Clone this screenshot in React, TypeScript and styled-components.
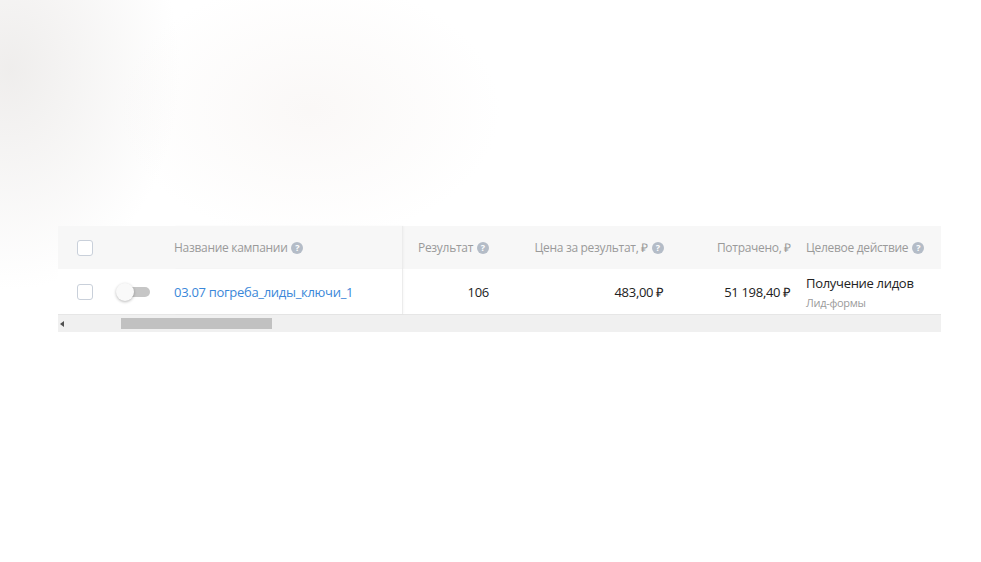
import React from "react";
import styled, { createGlobalStyle } from "styled-components";

const GlobalStyle = createGlobalStyle`
  html, body {
    margin: 0;
    padding: 0;
    background: #fff;
    font-family: "Open Sans", "Liberation Sans", sans-serif;
  }
`;

const PageStyle = styled.div`
  width: 981px;
  height: 562px;
  box-sizing: border-box;
  padding: 226px 40px 0 58px;
  overflow: hidden;
  background:
    radial-gradient(ellipse 170px 220px at 10px 70px, rgba(226, 223, 221, 0.55), rgba(255, 255, 255, 0) 100%),
    radial-gradient(ellipse 190px 130px at 310px 110px, rgba(246, 242, 240, 0.55), rgba(255, 255, 255, 0) 100%),
    #fff;
`;

const TableStyle = styled.div`
  width: 883px;
  display: flex;
  flex-direction: column;
  letter-spacing: -0.3px;
`;

const columns = "54px 62px 229px 102px 175px 119px 142px";

const HeaderRow = styled.div`
  display: grid;
  grid-template-columns: ${columns};
  height: 43px;
  background: #f7f7f7;
  color: #9a9a9a;
  font-size: 12px;
`;

const BodyRow = styled.div`
  display: grid;
  grid-template-columns: ${columns};
  height: 45px;
  background: #fff;
  border-bottom: 1px solid #e6e6e6;
  color: #222;
  font-size: 13px;
`;

const Cell = styled.div<{ $align?: "left" | "right" | "center"; $divider?: boolean; $pl?: number; $pr?: number }>`
  display: flex;
  align-items: center;
  justify-content: ${(p) => (p.$align === "right" ? "flex-end" : p.$align === "center" ? "center" : "flex-start")};
  padding-left: ${(p) => p.$pl ?? 0}px;
  padding-right: ${(p) => p.$pr ?? 0}px;
  white-space: nowrap;
  border-right: ${(p) => (p.$divider ? "1px solid #ececec" : "none")};
  box-shadow: ${(p) => (p.$divider ? "1px 0 2px rgba(0,0,0,0.03)" : "none")};
`;

const StackCell = styled(Cell)`
  flex-direction: column;
  align-items: flex-start;
  justify-content: center;
  padding-top: 2px;
  line-height: 19px;
`;

const Checkbox = styled.div`
  width: 14px;
  height: 14px;
  border: 1.5px solid #c9d0da;
  border-radius: 3px;
  background: #fff;
`;

const ToggleTrack = styled.div`
  position: relative;
  width: 26px;
  height: 10px;
  margin-left: 8px;
  border-radius: 5px;
  background: #c6c6c6;
`;

const ToggleKnob = styled.div`
  position: absolute;
  left: -8px;
  top: -4px;
  width: 18px;
  height: 18px;
  border-radius: 50%;
  background: #f9f9f9;
  box-shadow: 0 1px 3px rgba(0, 0, 0, 0.28);
`;

const Link = styled.a`
  color: #3a87d9;
  text-decoration: none;
  font-size: 13px;
`;

const HelpIcon = styled.span`
  display: inline-flex;
  align-items: center;
  justify-content: center;
  width: 12px;
  height: 12px;
  margin-left: 4px;
  border-radius: 50%;
  background: #b4bcc7;
  color: #fff;
  font-size: 9px;
  font-weight: 700;
  line-height: 1;
  letter-spacing: 0;
`;

const SubText = styled.span`
  color: #9a9a9a;
  font-size: 11px;
`;

const ScrollBar = styled.div`
  display: flex;
  align-items: center;
  height: 17px;
  background: #f0f0f0;
`;

const ScrollArrow = styled.div`
  width: 0;
  height: 0;
  margin-left: 2px;
  border-top: 3.5px solid transparent;
  border-bottom: 3.5px solid transparent;
  border-right: 4px solid #505050;
`;

const ScrollThumb = styled.div`
  width: 151px;
  height: 11px;
  margin-left: 57px;
  background: #c1c1c1;
`;

function Help() {
  return <HelpIcon>?</HelpIcon>;
}

export default function App() {
  return (
    <PageStyle>
      <GlobalStyle />
      <TableStyle>
        <HeaderRow>
          <Cell $align="center"><Checkbox /></Cell>
          <Cell />
          <Cell $divider>Название кампании<Help /></Cell>
          <Cell $align="right" $pr={16}>Результат<Help /></Cell>
          <Cell $align="right" $pr={16}>Цена за результат, ₽<Help /></Cell>
          <Cell $align="right" $pr={8}>Потрачено, ₽</Cell>
          <Cell $pl={7}>Целевое действие<Help /></Cell>
        </HeaderRow>
        <BodyRow>
          <Cell $align="center"><Checkbox /></Cell>
          <Cell $pl={4}>
            <ToggleTrack><ToggleKnob /></ToggleTrack>
          </Cell>
          <Cell $divider><Link href="#">03.07 погреба_лиды_ключи_1</Link></Cell>
          <Cell $align="right" $pr={16}>106</Cell>
          <Cell $align="right" $pr={16}>483,00 ₽</Cell>
          <Cell $align="right" $pr={8}>51 198,40 ₽</Cell>
          <StackCell $pl={7}>
            <span>Получение лидов</span>
            <SubText>Лид-формы</SubText>
          </StackCell>
        </BodyRow>
        <ScrollBar>
          <ScrollArrow />
          <ScrollThumb />
        </ScrollBar>
      </TableStyle>
    </PageStyle>
  );
}
